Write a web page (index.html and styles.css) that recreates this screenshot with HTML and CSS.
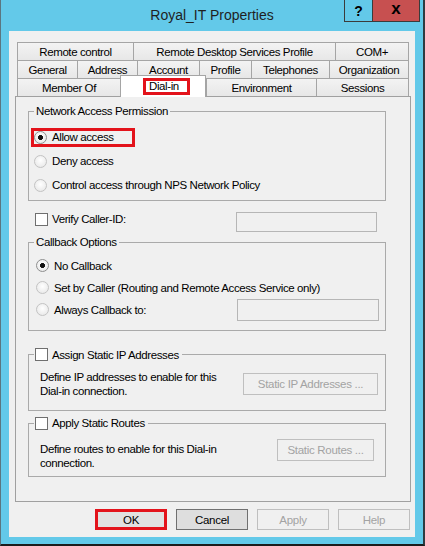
FILE: index.html
```html
<!DOCTYPE html>
<html lang="en">
<head>
  <meta charset="UTF-8">
  <meta name="viewport" content="width=device-width, initial-scale=1.0">
  <title>Royal_IT Properties</title>
  <link rel="stylesheet" href="styles.css">
</head>
<body>
  <div class="window">
    <div class="titlebar">
      <span></span>
      <span class="title">Royal_IT Properties</span>
      <div class="caption">
        <button class="cap-btn cap-help" type="button">?</button>
        <button class="cap-btn cap-close" type="button">x</button>
      </div>
    </div>

    <div class="client">
      <div class="tabs">
        <div class="tab-row row-top">
          <div class="tab">Remote control</div>
          <div class="tab">Remote Desktop Services Profile</div>
          <div class="tab">COM+</div>
        </div>
        <div class="tab-row row-mid">
          <div class="tab">General</div>
          <div class="tab">Address</div>
          <div class="tab">Account</div>
          <div class="tab">Profile</div>
          <div class="tab">Telephones</div>
          <div class="tab">Organization</div>
        </div>
        <div class="tab-row row-front">
          <div class="tab">Member Of</div>
          <div class="tab active"><span class="mark-tab">Dial-in</span></div>
          <div class="tab">Environment</div>
          <div class="tab">Sessions</div>
        </div>
      </div>

      <div class="page">
        <fieldset class="group group-access">
          <legend>Network Access Permission</legend>
          <div class="access-list">
            <div class="option-row">
              <label class="option mark-allow"><input class="radio" type="radio" name="access" checked> Allow access</label>
            </div>
            <div class="option-row">
              <label class="option"><input class="radio" type="radio" name="access"> Deny access</label>
            </div>
            <div class="option-row">
              <label class="option"><input class="radio" type="radio" name="access"> Control access through NPS Network Policy</label>
            </div>
          </div>
        </fieldset>

        <div class="caller-row">
          <label class="check-label"><input class="check" type="checkbox"> Verify Caller-ID:</label>
          <div class="textbox caller-box"></div>
        </div>

        <fieldset class="group group-callback">
          <legend>Callback Options</legend>
          <div class="callback-list">
            <div class="callback-row">
              <label class="option"><input class="radio" type="radio" name="callback" checked> No Callback</label>
            </div>
            <div class="callback-row">
              <label class="option"><input class="radio" type="radio" name="callback"> Set by Caller (Routing and Remote Access Service only)</label>
            </div>
            <div class="callback-row">
              <label class="option"><input class="radio" type="radio" name="callback"> Always Callback to:</label>
              <div class="textbox callback-box"></div>
            </div>
          </div>
        </fieldset>

        <fieldset class="group group-ip">
          <legend class="check-legend"><label class="check-label"><input class="check" type="checkbox"> Assign Static IP Addresses</label></legend>
          <div class="group-body body-ip">
            <p class="note">Define IP addresses to enable for this<br>Dial-in connection.</p>
            <button class="btn btn-ip" type="button" disabled>Static IP Addresses ...</button>
          </div>
        </fieldset>

        <fieldset class="group group-routes">
          <legend class="check-legend"><label class="check-label"><input class="check" type="checkbox"> Apply Static Routes</label></legend>
          <div class="group-body body-routes">
            <p class="note">Define routes to enable for this Dial-in<br>connection.</p>
            <button class="btn btn-routes" type="button" disabled>Static Routes ...</button>
          </div>
        </fieldset>
      </div>

      <div class="dialog-buttons">
        <button class="btn btn-ok" type="button">OK</button>
        <button class="btn btn-cancel" type="button">Cancel</button>
        <button class="btn" type="button" disabled>Apply</button>
        <button class="btn" type="button" disabled>Help</button>
      </div>
    </div>
  </div>
</body>
</html>
```

FILE: styles.css
```css
* {
  box-sizing: border-box;
}
body {
  margin: 0;
  font-family: 'Liberation Sans', Arial, sans-serif;
  font-size: 11.5px;
  letter-spacing: -0.4px;
  color: #000;
  background-color: #63c9e9;
}
.window {
  width: 425px;
  height: 546px;
  display: flex;
  flex-direction: column;
  background-color: #63c9e9;
  border-left: 1px solid #5b7680;
  border-right: 2px solid #2f3b40;
  border-bottom: 2px solid #1c1c1c;
}
.titlebar {
  height: 31px;
  flex: none;
  display: grid;
  grid-template-columns: 1fr auto 1fr;
}
.title {
  align-self: center;
  font-size: 14px;
  letter-spacing: 0;
  color: #1f1f1f;
  padding-bottom: 1px;
}
.caption {
  justify-self: end;
  display: flex;
  height: 22px;
  margin-right: 3px;
}
.cap-btn {
  padding: 0;
  border: 1px solid #3b3b3b;
  border-top: none;
  font-family: 'Liberation Sans', Arial, sans-serif;
  font-weight: bold;
  color: #000;
  display: flex;
  align-items: center;
  justify-content: center;
}
.cap-help {
  width: 29px;
  font-size: 14px;
  background-color: #63c9e9;
}
.cap-close {
  width: 47px;
  font-size: 17px;
  padding-bottom: 3px;
  border-left: none;
  background-color: #c75050;
}
.client {
  flex: 1;
  margin: 0 8px 7px 8px;
  padding: 11px 4px 0 6px;
  background-color: #f0f0f0;
}

/* tabs */
.tabs {
  padding: 0 2px;
}
.tab-row {
  display: grid;
  height: 18px;
}
.row-top {
  grid-template-columns: 116px 202px 74px;
}
.row-mid {
  grid-template-columns: 60px 60px 62px 52px 78px 80px;
}
.row-front {
  grid-template-columns: 103px 86px 110px 93px;
}
.tab {
  display: flex;
  align-items: center;
  justify-content: center;
  white-space: nowrap;
  border: 1px solid #a5a5a5;
  border-bottom: none;
  border-right: none;
  background: linear-gradient(#f3f3f3, #e7e7e7);
}
.tab:last-child {
  border-right: 1px solid #a5a5a5;
}
.tab.active {
  position: relative;
  z-index: 2;
  margin-top: -3px;
  margin-bottom: -1px;
  border-right: 1px solid #a5a5a5;
  background: #fff;
}
.mark-tab {
  width: 41px;
  height: 11px;
  line-height: 11px;
  margin-left: 7px;
  padding-left: 3px;
  outline: 3px solid #e3131b;
}

/* tab page */
.page {
  height: 406px;
  padding: 0 24px 0 12px;
  border: 1px solid #a0a0a0;
  background-color: #f0f0f0;
}
.group {
  margin: 0;
  padding: 0;
  min-width: 0;
  border: 1px solid #aaaaaa;
}
.group legend {
  margin-left: 5px;
  padding: 0 2px;
  line-height: 14px;
  height: 14px;
}
.group .check-legend {
  display: flex;
  align-items: center;
  padding: 0 3px 0 1px;
}
.option {
  display: inline-flex;
  align-items: center;
  gap: 5px;
  white-space: nowrap;
}
.check-label {
  display: inline-flex;
  align-items: center;
  gap: 4px;
  line-height: 14px;
  white-space: nowrap;
}
.radio {
  -webkit-appearance: none;
  appearance: none;
  flex: none;
  width: 13px;
  height: 13px;
  margin: 0;
  border-radius: 50%;
  border: 1px solid #c3c3c3;
  background: radial-gradient(circle at 50% 40%, #fff, #e4e4e4);
}
.radio:checked {
  border-color: #8e8f8f;
  background: radial-gradient(circle, #111 0 2.2px, transparent 2.8px), radial-gradient(circle at 50% 40%, #fff, #e4e4e4);
}
.check {
  -webkit-appearance: none;
  appearance: none;
  flex: none;
  width: 13px;
  height: 13px;
  margin: 0;
  border: 1px solid #6f6f6f;
  background-color: #fff;
}
.textbox {
  margin-left: auto;
  border: 1px solid #b6b6b6;
  background-color: #f0f0f0;
}

.group-access {
  margin-top: 7px;
}
.access-list {
  padding: 7px 0 3px 5px;
}
.option-row {
  height: 24px;
  display: flex;
  align-items: center;
}
.mark-allow {
  width: 98px;
  height: 13px;
  outline: 3px solid #e3131b;
}

.caller-row {
  display: flex;
  align-items: flex-start;
  height: 20px;
  margin-top: 11px;
  padding: 0 9px 0 7px;
}
.caller-box {
  width: 141px;
  height: 20px;
}

.group-callback {
  margin-top: 3px;
}
.callback-list {
  padding: 5.5px 6px 9px 7px;
}
.callback-row {
  height: 22px;
  display: flex;
  align-items: center;
}
.callback-box {
  width: 142px;
  height: 22px;
}

.group-body {
  display: flex;
  justify-content: space-between;
}
.note {
  margin: 0;
  line-height: 14px;
}
.group-ip {
  margin-top: 17px;
}
.body-ip {
  align-items: center;
  padding: 8px 7px 12.5px 11px;
}
.group-routes {
  margin-top: 5px;
}
.body-routes {
  align-items: flex-start;
  padding: 8.5px 11px 6px 11px;
}
.body-routes .note {
  margin-top: 3.5px;
}

/* buttons */
.btn {
  height: 21px;
  padding: 0;
  font-family: inherit;
  font-size: 11.5px;
  letter-spacing: -0.3px;
  color: #000;
  border: 1px solid #adadad;
  background-color: #e1e1e1;
}
.btn:disabled {
  color: #a3a3a3;
  border-color: #bfbfbf;
  background-color: #f0f0f0;
}
.btn-ip {
  width: 135px;
  height: 22px;
}
.btn-routes {
  width: 97px;
  height: 22px;
}
.dialog-buttons {
  display: flex;
  justify-content: flex-end;
  gap: 9px;
  margin-top: 7px;
  padding-right: 1px;
}
.dialog-buttons .btn {
  width: 72px;
}
.btn-cancel {
  border-color: #707070;
  background-color: #dedede;
}
.btn-ok {
  border-color: #707070;
  outline: 3px solid #e3131b;
  outline-offset: -3px;
}
```
